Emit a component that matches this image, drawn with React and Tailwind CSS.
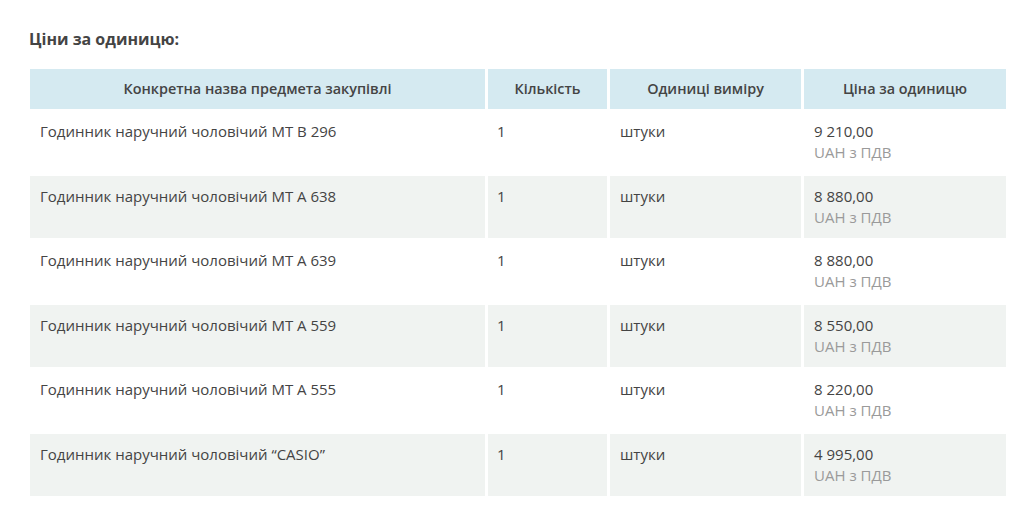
import React from 'react';

const rows = [
  { name: 'Годинник наручний чоловічий МТ B 296', qty: '1', unit: 'штуки', price: '9 210,00' },
  { name: 'Годинник наручний чоловічий МТ A 638', qty: '1', unit: 'штуки', price: '8 880,00' },
  { name: 'Годинник наручний чоловічий МТ A 639', qty: '1', unit: 'штуки', price: '8 880,00' },
  { name: 'Годинник наручний чоловічий МТ A 559', qty: '1', unit: 'штуки', price: '8 550,00' },
  { name: 'Годинник наручний чоловічий МТ A 555', qty: '1', unit: 'штуки', price: '8 220,00' },
  { name: 'Годинник наручний чоловічий “CASIO”', qty: '1', unit: 'штуки', price: '4 995,00' },
];

const headers = ['Конкретна назва предмета закупівлі', 'Кількість', 'Одиниці виміру', 'Ціна за одиницю'];

const App = () => {
  return (
    <div className="min-h-[520px] bg-white pl-[29px] pt-[28px] font-['Open_Sans',sans-serif] text-[#444]">
      <h3 className="text-[16px] font-bold leading-[22px]">Ціни за одиницю:</h3>

      <div className="ml-px mt-[19px] grid w-[976px] grid-cols-[455px_119px_191px_202px] gap-x-[3px] gap-y-[2.5px]">
        {headers.map((h) => (
          <div key={h} className="flex h-[39.5px] items-center justify-center bg-[#d5eaf1] text-[14.4px] font-semibold">
            {h}
          </div>
        ))}

        {rows.map((r, i) => {
          const bg = i % 2 === 1 ? 'bg-[#f0f3f1]' : 'bg-white';
          return (
            <React.Fragment key={i}>
              <div className={`${bg} h-[62px] px-[10px] py-[10px] text-[15px] leading-[21px]`}>{r.name}</div>
              <div className={`${bg} h-[62px] px-[9px] py-[10px] text-[15px] leading-[21px]`}>{r.qty}</div>
              <div className={`${bg} h-[62px] px-[10px] py-[10px] text-[15px] leading-[21px]`}>{r.unit}</div>
              <div className={`${bg} h-[62px] px-[10px] py-[10px] text-[15px] leading-[21px]`}>
                <div>{r.price}</div>
                <div className="text-[#9a9a9a]">UAH з ПДВ</div>
              </div>
            </React.Fragment>
          );
        })}
      </div>
    </div>
  );
};

export default App;
